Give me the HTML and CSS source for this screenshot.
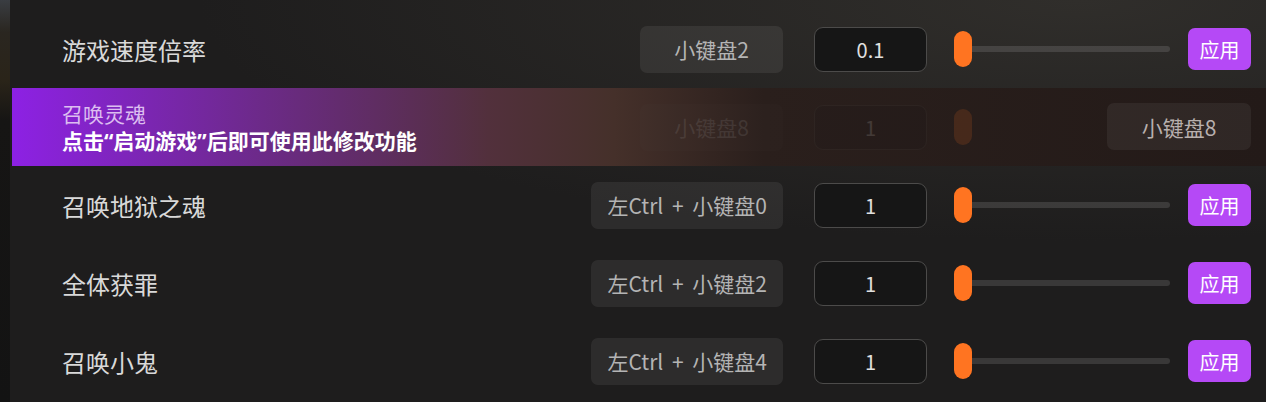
FILE: index.html
```html
<!DOCTYPE html>
<html lang="zh-CN">
<head>
  <meta charset="UTF-8">
  <meta name="viewport" content="width=device-width, initial-scale=1.0">
  <title>修改器</title>
  <link rel="stylesheet" href="styles.css">
</head>
<body>
  <div class="side"></div>
  <div class="panel">
    <div class="row">
      <div class="label">游戏速度倍率</div>
      <div class="key">小键盘2</div>
      <div class="value">0.1</div>
      <div class="slider"><span class="thumb"></span></div>
      <button class="apply">应用</button>
    </div>

    <div class="row active">
      <div class="label-tip">
        <div class="tip-name">召唤灵魂</div>
        <div class="tip-text">点击<span class="quote">“</span>启动游戏<span class="quote">”</span>后即可使用此修改功能</div>
      </div>
      <div class="faded">
        <div class="key">小键盘8</div>
        <div class="value">1</div>
        <div class="slider"><span class="thumb"></span></div>
      </div>
      <div class="key key-badge">小键盘8</div>
    </div>

    <div class="row">
      <div class="label">召唤地狱之魂</div>
      <div class="key">左Ctrl + 小键盘0</div>
      <div class="value">1</div>
      <div class="slider"><span class="thumb"></span></div>
      <button class="apply">应用</button>
    </div>

    <div class="row">
      <div class="label">全体获罪</div>
      <div class="key">左Ctrl + 小键盘2</div>
      <div class="value">1</div>
      <div class="slider"><span class="thumb"></span></div>
      <button class="apply">应用</button>
    </div>

    <div class="row">
      <div class="label">召唤小鬼</div>
      <div class="key">左Ctrl + 小键盘4</div>
      <div class="value">1</div>
      <div class="slider"><span class="thumb"></span></div>
      <button class="apply">应用</button>
    </div>
  </div>
</body>
</html>
```

FILE: styles.css
```css
body {
  display: flex;
  margin: 0;
  height: 402px;
  overflow: hidden;
  font-family: "Noto Sans CJK SC", "Noto Sans", sans-serif;
  background: #141414;
}

.side {
  width: 10px;
  flex-shrink: 0;
  background: linear-gradient(180deg, #3a3d42 0%, #2a2620 8%, #2a2419 20%, #161514 30%, #131313 100%);
}

.panel {
  flex: 1;
  padding: 10px 0 0 2px;
  background:
    radial-gradient(ellipse 70% 60% at 85% 0%, #302e2b 0%, rgba(30, 30, 30, 0) 100%),
    #1e1d1d;
}

.row {
  position: relative;
  display: flex;
  align-items: center;
  height: 78px;
  padding: 0 15px 0 50px;
}

.label {
  flex: 1;
  font-size: 24px;
  color: #d9d9d9;
}

.key {
  min-width: 111px;
  height: 47px;
  padding: 0 16px;
  margin-right: 31px;
  display: flex;
  align-items: center;
  justify-content: center;
  border-radius: 7px;
  background: rgba(255, 255, 255, 0.07);
  color: #b4b4b4;
  font-size: 21px;
  word-spacing: 4px;
}

.value {
  width: 111px;
  height: 43px;
  margin-right: 27px;
  display: flex;
  align-items: center;
  justify-content: center;
  border: 1px solid #4c4b4a;
  border-radius: 9px;
  background: #161616;
  color: #e0e0e0;
  font-size: 20px;
}

.slider {
  position: relative;
  width: 216px;
  height: 6px;
  margin-right: 18px;
  border-radius: 3px;
  background: rgba(255, 255, 255, 0.12);
}

.thumb {
  position: absolute;
  left: 0;
  top: -15px;
  width: 18px;
  height: 36px;
  border-radius: 9px;
  background: #ff7421;
}

.apply {
  width: 63px;
  height: 42px;
  border: none;
  border-radius: 7px;
  background: #b549f6;
  color: #ffffff;
  font-family: inherit;
  font-size: 20px;
  padding: 0;
}

.active {
  background: linear-gradient(90deg, #8d21e4 0%, #6c2a88 20%, #52303c 38%, #45302a 48%, #2a1f1c 60%, #231a18 100%);
}

.label-tip {
  flex: 1;
  font-size: 21px;
  line-height: 27px;
}

.tip-name {
  color: #dcbdf0;
}

.tip-text {
  color: #ffffff;
  font-weight: bold;
}

.quote {
  font-family: "Noto Sans", sans-serif;
}

.faded {
  display: flex;
  align-items: center;
  margin-right: 63px;
  opacity: 0.14;
}

.faded .slider {
  margin-right: 18px;
}

.faded .slider {
  background: transparent;
}

.key-badge {
  position: absolute;
  right: 15px;
  top: 15px;
  margin: 0;
  min-width: 112px;
  color: #b8b0ae;
  background: rgba(255, 255, 255, 0.06);
}
```
